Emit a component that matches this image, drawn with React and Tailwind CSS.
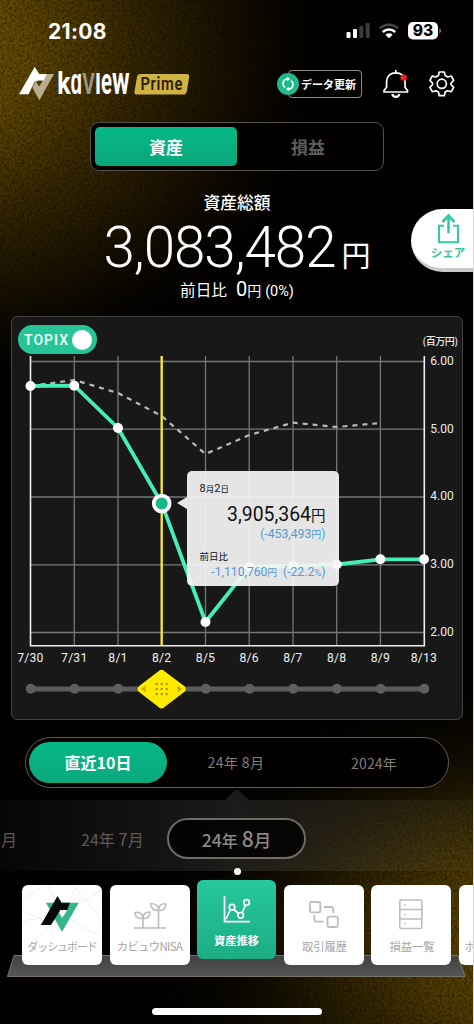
import React from "react";

const xs = [30.5, 74.3, 118, 161.7, 205.5, 249.2, 293, 336.7, 380.4, 424];
const dates = ["7/30", "7/31", "8/1", "8/2", "8/5", "8/6", "8/7", "8/8", "8/9", "8/13"];
const levels = [
  [361.5, "6.00"],
  [429.2, "5.00"],
  [497, "4.00"],
  [564.8, "3.00"],
  [632.5, "2.00"],
];
const assets = [386, 385.7, 428, 503.5, 622, 567, 566, 564.5, 559.3, 559.3];
const topix = "30.5,386 74.3,380 118,393 161.7,416 205.5,454 249.2,435 293,422.7 336.7,427 377,423.3";

function Background() {
  return (
    <svg className="absolute inset-0" width="474" height="1024" aria-hidden="true">
      <defs>
        <radialGradient id="tl" gradientUnits="userSpaceOnUse" cx="0" cy="0" r="1" gradientTransform="translate(-70 50) scale(390 330)">
          <stop offset="0" stopColor="#7a5a00" />
          <stop offset="0.25" stopColor="#634900" />
          <stop offset="0.55" stopColor="#332500" />
          <stop offset="0.8" stopColor="#140d00" />
          <stop offset="1" stopColor="#0a0600" stopOpacity="0" />
        </radialGradient>
        <radialGradient id="br" gradientUnits="userSpaceOnUse" cx="0" cy="0" r="1" gradientTransform="translate(540 950) scale(390 280)">
          <stop offset="0" stopColor="#6d5000" />
          <stop offset="0.3" stopColor="#513c00" />
          <stop offset="0.6" stopColor="#221900" />
          <stop offset="1" stopColor="#050300" stopOpacity="0" />
        </radialGradient>
        <filter id="grain" x="0" y="0" width="100%" height="100%">
          <feTurbulence type="fractalNoise" baseFrequency="0.4" numOctaves="2" seed="4" />
          <feColorMatrix values="0 0 0 0 0  0 0 0 0 0  0 0 0 0 0  0.9 0 0 0 -0.3" />
        </filter>
      </defs>
      <rect width="474" height="1024" fill="#020100" />
      <rect width="474" height="400" fill="url(#tl)" />
      <rect y="640" width="474" height="384" fill="url(#br)" />
      <rect width="474" height="1024" filter="url(#grain)" />
      <rect x="473" width="1" height="1024" fill="#d8d8d8" />
    </svg>
  );
}

function StatusBar() {
  return (
    <div className="flex h-[62px] items-center justify-between pl-[48px] pr-[33px]">
      <span className="mt-[2px] font-['Inter',sans-serif] text-[21px] leading-[24px] font-bold tracking-[0.3px] text-white">21:08</span>
      <svg width="96" height="20" viewBox="345 22 96 20" className="font-['Inter',sans-serif]">
        <g fill="#fff">
          <rect x="346.5" y="33" width="4" height="6" rx="1" />
          <rect x="353" y="30" width="4" height="9" rx="1" />
        </g>
        <g fill="#3c3c3c">
          <rect x="359.3" y="27" width="4" height="12" rx="1" />
          <rect x="365.7" y="24" width="4" height="15" rx="1" />
        </g>
        <g fill="none" strokeWidth="2.6">
          <path d="M380 29.3a13.2 13.2 0 0 1 18 0" stroke="#444" />
          <path d="M382.8 33a9 9 0 0 1 12.4 0" stroke="#fff" />
        </g>
        <path d="M389 39.3l-3.6-3.6a5.2 5.2 0 0 1 7.2 0z" fill="#fff" />
        <rect x="408" y="23" width="30" height="17.5" rx="5" fill="#fff" />
        <path d="M439.3 29v5.5a3 3 0 0 0 0-5.5z" fill="#777" />
        <text x="423" y="37.4" textAnchor="middle" fontSize="15.5" fontWeight="800" fill="#000" textLength="20.5" lengthAdjust="spacingAndGlyphs">93</text>
      </svg>
    </div>
  );
}

function Header() {
  return (
    <div className="flex h-[44px] items-center justify-between pl-[18px] pr-[19px]">
      <svg width="174" height="44" viewBox="18 62 174 44" className="overflow-visible">
        <path d="M36.5 74H54L39.3 100.3L32.4 87.5L35.8 81.3L39.2 86.5L43 80.3H36z" fill="#b9ad91" />
        <path d="M34.8 66.8L39.3 74.2H46.8L43.6 80.4H38.2L34.5 82L28.5 94.2H19z" fill="#fff" />
        <g className="font-['Roboto',sans-serif]" fontWeight="700" fill="#fff">
          <text x="57.2" y="93.7" fontSize="31" textLength="13.3" lengthAdjust="spacingAndGlyphs">k</text>
          <text x="70.6" y="93.7" fontSize="37" textLength="11.6" lengthAdjust="spacingAndGlyphs">ɑ</text>
          <text x="82.3" y="93.7" fontSize="30" fill="#9c9484" textLength="12.6" lengthAdjust="spacingAndGlyphs">V</text>
          <text x="95" y="93.7" fontSize="38" textLength="6" lengthAdjust="spacingAndGlyphs">ı</text>
          <text x="101.1" y="93.7" fontSize="37" textLength="10.9" lengthAdjust="spacingAndGlyphs">e</text>
          <text x="112.1" y="93.7" fontSize="38" textLength="17.6" lengthAdjust="spacingAndGlyphs">w</text>
        </g>
        <path d="M140.5 74H186.5Q189.7 74 189.2 77L186.8 91.5Q186.3 94.6 183 94.6H137.2Q134 94.6 134.5 91.5L137 77Q137.5 74 140.5 74z" fill="#cfb344" />
        <text x="140.5" y="90.4" className="font-['Roboto',sans-serif]" fontWeight="600" fontSize="18" fill="#2b2000" textLength="42.5" letterSpacing="0.8" lengthAdjust="spacingAndGlyphs">Prime</text>
      </svg>
      <div className="flex items-center">
        <div className="relative mr-[19px] flex h-[28px] w-[74px] items-center justify-end rounded-[4px] border border-[#8b8b8b] pr-[5px]">
          <span className="absolute -left-[12px] flex h-[22px] w-[22px] items-center justify-center rounded-full bg-[#1fb98b]">
            <svg width="16" height="16" viewBox="0 0 16 16" fill="none" stroke="#fff" strokeWidth="1.7">
              <path d="M9 2.8C5 2.3 2.6 5.2 3.1 8.3C3.3 9.6 4 10.7 5 11.4" />
              <path d="M7 13.2C11 13.7 13.4 10.8 12.9 7.7C12.7 6.4 12 5.3 11 4.6" />
              <path d="M7.2 .4L10 3L7.2 5.5z M8.8 10.5L6 13L8.8 15.6z" fill="#fff" stroke="none" />
            </svg>
          </span>
          <span className="font-['Noto_Sans_CJK_JP',sans-serif] text-[11px] leading-[16px] font-bold whitespace-nowrap text-white">データ更新</span>
        </div>
        <svg width="74" height="32" viewBox="381 68 74 32" fill="none" stroke="#fff" strokeWidth="1.7" strokeLinejoin="round">
          <path d="M384 92H407.5V90.5L405 87.3V81C405 76 401 72.8 395.8 72.8C390.6 72.8 386.6 76 386.6 81V87.3L384 90.5z" />
          <path d="M395.8 70.5V73" strokeLinecap="round" />
          <path d="M392.2 94A3.7 3.7 0 0 0 399.4 94" strokeWidth="2.2" />
          <circle cx="403.7" cy="77.6" r="3.2" fill="#f01e1e" stroke="none" />
          <circle cx="441.8" cy="83.8" r="4.6" />
          <path d="M439.3 72H444.3L445.2 75.6L447.7 77L451.3 76L453.7 80.4L451.1 83V84.7L453.7 87.3L451.3 91.7L447.7 90.7L445.2 92L444.3 95.7H439.3L438.4 92L435.9 90.7L432.3 91.7L429.9 87.3L432.5 84.7V83L429.9 80.4L432.3 76L435.9 77L438.4 75.6z" />
        </svg>
      </div>
    </div>
  );
}

function Summary() {
  return (
    <>
      <div className="mx-auto mt-[16px] flex h-[49px] w-[294px] rounded-[9px] border-[1.5px] border-[#54514e] bg-[#020100] p-[4px] font-['Noto_Sans_CJK_JP',sans-serif] text-[17px] leading-[39px]">
        <div className="w-[142px] rounded-[5px] bg-linear-to-b from-[#06b887] to-[#0aa67b] text-center font-bold text-white">資産</div>
        <div className="flex-1 text-center font-bold text-[#5d5d5d]">損益</div>
      </div>
      <div className="mt-[17px] h-[28px] text-center font-['Noto_Sans_CJK_JP',sans-serif] text-[16.8px] leading-[28px] font-medium text-white">資産総額</div>
      <div className="mt-[2px] flex h-[60px] items-baseline justify-center text-white">
        <span className="font-['Roboto',sans-serif] text-[56.5px] leading-[60px] font-light tracking-[-1px]">3,083,482</span>
        <span className="ml-[6px] font-['Noto_Sans_CJK_JP',sans-serif] text-[29px] leading-[30px]">円</span>
      </div>
      <div className="-mt-[3px] flex h-[28px] items-baseline justify-center font-['Roboto','Noto_Sans_CJK_JP',sans-serif] leading-[28px] text-white">
        <span className="text-[15.6px]">前日比</span>
        <span className="ml-[9px] text-[20px]">0</span>
        <span className="text-[14px]">円</span>
        <span className="ml-[4px] text-[14.5px]">(0%)</span>
      </div>
      <div className="absolute top-[209px] left-[411px] flex h-[63px] w-[62px] flex-col items-center rounded-l-[32px] border-b-[4px] border-[#c9c9c9] bg-white pl-[12px]">
        <svg width="26" height="32" viewBox="435 212 26 32" className="mt-[3px] shrink-0" fill="none" stroke="#35c9a3" strokeWidth="2">
          <path d="M444 225.7H439V242.2H458V225.7H453" />
          <path d="M448.5 233V218" strokeWidth="2.6" />
          <path d="M442.5 222L448.5 215.5L454.5 222" strokeWidth="2.6" />
        </svg>
        <span className="font-['Noto_Sans_CJK_JP',sans-serif] text-[11.5px] leading-[16px] font-bold text-[#35c9a3]">シェア</span>
      </div>
    </>
  );
}

function ChartCard() {
  return (
    <div className="relative mt-[13px] ml-[11px] h-[404px] w-[452px] rounded-[6px] border-[1.5px] border-[#434343] bg-[#181818]">
      <svg width="449" height="401" viewBox="12 317 449 401" className="block font-['Roboto',sans-serif]">
        <g stroke="#777" strokeWidth="1.3">
          {levels.map(([y]) => <path key={y} d={`M30 ${y}H424`} />)}
          {xs.slice(1, 9).map((x) => <path key={x} d={`M${x} 356V645`} />)}
        </g>
        <path d="M30.5 356V645.7H424.3V356" fill="none" stroke="#eee" strokeWidth="1.6" />
        <polyline points={topix} fill="none" stroke="#b9b9b9" strokeWidth="2.2" strokeDasharray="5 5" />
        <path d="M161.7 356V645" stroke="#f3e33a" strokeWidth="2.4" />
        <polyline points={xs.map((x, i) => `${x},${assets[i]}`).join(" ")} fill="none" stroke="#45edb8" strokeWidth="3.8" strokeLinejoin="round" />
        {xs.map((x, i) => <circle key={x} cx={x} cy={assets[i]} r={i === 3 ? 8 : 5} fill="#fff" stroke={i === 3 ? "#fff" : "none"} strokeWidth="3.6" />)}
        <circle cx="161.7" cy="503.5" r="6" fill="#15b98a" />
        <g fill="#ededed" fontSize="12">
          {levels.map(([y, t]) => <text key={t} x="430.3" y={y + 3.3} textLength="23.5">{t}</text>)}
          {dates.map((d, i) => <text key={d} x={xs[i]} y="662" fontSize="12.2" textAnchor="middle" letterSpacing="0.2">{d}</text>)}
        </g>
        <text x="422.5" y="345" fontSize="10" fontWeight="500" fill="#ededed" textLength="35.5" className="font-['Noto_Sans_CJK_JP',sans-serif]">(百万円)</text>
        <path d="M31 689H423.5" stroke="#5b5b5b" strokeWidth="4.8" />
        {xs.map((x) => <circle key={x} cx={x + 0.3} cy="688.8" r="5" fill="#5f5f5f" />)}
        <path d="M158.5 671.2Q161.5 668.5 164.5 671.2L184.5 686.2Q187.2 689 184.5 691.8L164.5 707Q161.5 710 158.5 707L138.8 691.8Q136.2 689 138.8 686.2z" fill="#ffeb00" />
        <path d="M145.8 685.6V692.4L141 689zM177.5 685.6V692.4L182.3 689z" fill="#c7b100" />
        <g fill="#a89500">
          {[156.7, 161.7, 166.7].map((x) => [684, 689, 694].map((y) => <circle key={`${x}-${y}`} cx={x} cy={y} r="1.2" />))}
        </g>
      </svg>
      <div className="absolute top-[8px] left-[6px] flex h-[29px] w-[79px] items-center justify-between rounded-full bg-[#27c498] pr-[5px] pl-[6px]">
        <span className="font-['Roboto',sans-serif] text-[14px] leading-none font-semibold tracking-[1px] text-[#e4fff5]">TOPIX</span>
        <span className="h-[20px] w-[20px] shrink-0 rounded-full bg-white" />
      </div>
      <div className="absolute top-[154px] left-[174.5px] flex h-[115px] w-[152px] flex-col rounded-[5px] bg-[#f5f5f5]/93 px-[13px] pt-[9px] font-['Roboto','Noto_Sans_CJK_JP',sans-serif] text-[#111]">
        <span className="absolute top-[26px] -left-[10px] border-y-[6px] border-r-[10px] border-y-transparent border-r-[#e6e6e6]" />
        <span className="h-[16px] text-[8.5px] leading-[18px]"><span className="text-[11px]">8</span>月<span className="text-[11px]">2</span>日</span>
        <span className="h-[26px] text-right text-[19.4px] leading-[37px] whitespace-nowrap">3,905,364<span className="text-[14.5px]">円</span></span>
        <span className="h-[20px] text-right text-[12.2px] leading-[24px] whitespace-nowrap text-[#539bd3]">(-453,493<span className="text-[10px]">円</span>)</span>
        <span className="mt-[5px] h-[16px] text-[9.5px] leading-[20px]">前日比</span>
        <span className="text-right text-[12.2px] leading-[18px] whitespace-nowrap text-[#539bd3]">-1,110,760<span className="text-[9.5px]">円</span><span className="ml-[6px]">(-22.2<span className="text-[9.5px]">%</span>)</span></span>
      </div>
    </div>
  );
}

function Periods() {
  return (
    <div className="font-['Noto_Sans_CJK_JP',sans-serif]">
      <div className="mt-[17px] ml-[25px] flex h-[51px] w-[424px] items-center rounded-full border-[1.5px] border-[#5f5d5a] bg-[#020100] px-[3px] text-[#807e7b]">
        <div className="h-[41px] w-[138px] rounded-full bg-linear-to-b from-[#06b887] to-[#0ba87e] text-center text-[16px] leading-[41px] font-bold text-white">直近10日</div>
        <div className="-mt-[2px] w-[138px] text-center text-[14px] leading-[40px] tracking-[0.4px]">24年 8月</div>
        <div className="w-[138px] text-center text-[14px] leading-[40px] tracking-[0.2px]">2024年</div>
      </div>
      <svg width="474" height="12" viewBox="0 0 474 12" className="block"><path d="M225 12L235 2.5Q237 1 239 2.5L249 12z" fill="#1b1a19" /></svg>
      <div className="flex h-[71px] w-[473px] items-center overflow-hidden bg-linear-to-r from-white/2 via-white/10 to-white/3 pt-[6px] whitespace-nowrap text-[#5c5b59]">
        <div className="flex w-[17px] justify-end text-[16px]"><span>6月</span></div>
        <div className="ml-[64px] w-[64px] text-[16px]">24年 <span className="text-[17px]">7</span>月</div>
        <div className="ml-[22px] h-[41px] w-[139px] rounded-full border-[2px] border-[#6d6a67] bg-black/80 text-center text-[17.6px] leading-[37px] font-medium text-[#8b8986]">24<span className="text-[16px]">年</span> <span className="text-[21px]">8</span>月</div>
      </div>
      <div className="mx-auto -mt-[3px] h-[7px] w-[7px] rounded-full bg-white" />
    </div>
  );
}

const iconBox = "mx-auto block";

function BottomNav() {
  return (
    <div className="relative mt-[5px] h-[98px] w-[473px] overflow-hidden font-['Noto_Sans_CJK_JP',sans-serif] text-[11.3px] whitespace-nowrap text-[#a5a5a5]">
      <svg width="473" height="24" viewBox="0 954 473 24" className="absolute top-[74px] left-0">
        <defs><linearGradient id="shelf" x2="0" y2="1"><stop stopColor="#414141" /><stop offset="1" stopColor="#565656" /></linearGradient></defs>
        <path d="M14 955.5H458L465 976.5H7.5z" fill="url(#shelf)" stroke="#77736a" />
      </svg>
      <div className="relative flex w-[540px] items-start gap-[7.5px] pl-[22px]">
        <div className="mt-[5px] h-[80px] w-[80px] shrink-0 rounded-[6px] bg-white text-center">
          <svg width="80" height="50" viewBox="22 885 80 50" className={iconBox}>
            <g stroke="#efefef" fill="none"><path d="M22 921L61 914L102 890M48 885L61 914L40 935M61 914L98 935M22 901L45 885M22 910L50 924L53 935M73 885L96 912L102 925M61 914L78 885" /></g>
            <path d="M45.7 902.7H78.7L62 932L54 917.7L58 910.7L62.3 918L67.2 910L57 908L52 913z" fill="#35b58e" />
            <path d="M57.5 896L61.7 902.7H70L67.2 910H60.4L51 925H40.8z" fill="#0a0a0a" />
          </svg>
          <div className="-mt-[1px] text-[11px] leading-[24px] tracking-[-1.1px]">ダッシュボード</div>
        </div>
        <div className="mt-[5px] h-[80px] w-[80px] shrink-0 rounded-[6px] bg-white text-center">
          <svg width="80" height="50" viewBox="109 885 80 50" className={iconBox} fill="none" stroke="#bdbdbd" strokeWidth="1.6">
            <path d="M133 928H165M142 928V918M157.5 928V910M142 918.5C136 919 134 916.5 134 912.5C139 912 142 914 142 918.5zM142 918.5C142 914 144 912 148.8 912C149 916.5 147 919 142 918.5zM157.5 910.5C152 911 150 908 149.8 903.8C155 903.5 157.5 905.5 157.5 910.5zM157.5 910.5C157.5 905.5 160 903.5 164.8 903.8C165 908.5 162.5 911 157.5 910.5z" />
          </svg>
          <div className="-mt-[1px] text-[11.3px] leading-[24px] tracking-[-0.6px]">カビュウNISA</div>
        </div>
        <div className="h-[79px] w-[79px] shrink-0 rounded-[6px] bg-linear-to-b from-[#27c79d] to-[#1cad83] text-center text-white">
          <svg width="79" height="50" viewBox="197 880 79 50" className={iconBox} fill="none" stroke="#fff" strokeWidth="1.7">
            <path d="M224.5 896V921.7H250M226 919L230.5 909.5M234 909.5L238.5 913.5M242 913L245.3 905.5" />
            <circle cx="232" cy="907.2" r="2.8" /><circle cx="240.7" cy="915.3" r="2.8" /><circle cx="246.6" cy="902.5" r="2.8" />
          </svg>
          <div className="-mt-[2px] text-[11.2px] leading-[24px] font-bold">資産推移</div>
        </div>
        <div className="mt-[5px] h-[80px] w-[80px] shrink-0 rounded-[6px] bg-white text-center">
          <svg width="80" height="50" viewBox="284 885 80 50" className={iconBox} fill="none" stroke="#bdbdbd" strokeWidth="1.8">
            <rect x="310" y="902" width="10.3" height="10.3" rx="1.5" /><rect x="327.5" y="916.7" width="10.3" height="10.3" rx="1.5" />
            <path d="M324 907H331Q333.3 907 333.3 909V913M314.3 915V919.5Q314.3 921.7 316.5 921.7H323.5" />
          </svg>
          <div className="-mt-[1px] pl-[2px] leading-[24px]">取引履歴</div>
        </div>
        <div className="mt-[5px] h-[80px] w-[80px] shrink-0 rounded-[6px] bg-white text-center">
          <svg width="80" height="50" viewBox="371.5 885 80 50" className={iconBox} fill="none" stroke="#bdbdbd" strokeWidth="1.6">
            <rect x="400.3" y="900" width="22" height="28.5" rx="1.5" /><path d="M400 909.5H422M400 919H422" />
            <path d="M404.5 905H406M404.5 914.5H406M404.5 923.5H406" />
          </svg>
          <div className="-mt-[1px] pl-[2px] leading-[24px]">損益一覧</div>
        </div>
        <div className="mt-[5px] h-[80px] w-[80px] shrink-0 rounded-[6px] bg-white pt-[49px] pl-[6px] text-left leading-[24px]">ポートフォリオ</div>
      </div>
    </div>
  );
}

export default function App() {
  return (
    <div className="relative h-[1024px] w-[474px] overflow-hidden bg-black">
      <Background />
      <div className="relative flex flex-col">
        <StatusBar />
        <Header />
        <Summary />
        <ChartCard />
        <Periods />
        <BottomNav />
        <div className="mx-auto mt-[30px] h-[7px] w-[170px] rounded-full bg-white" />
      </div>
    </div>
  );
}
